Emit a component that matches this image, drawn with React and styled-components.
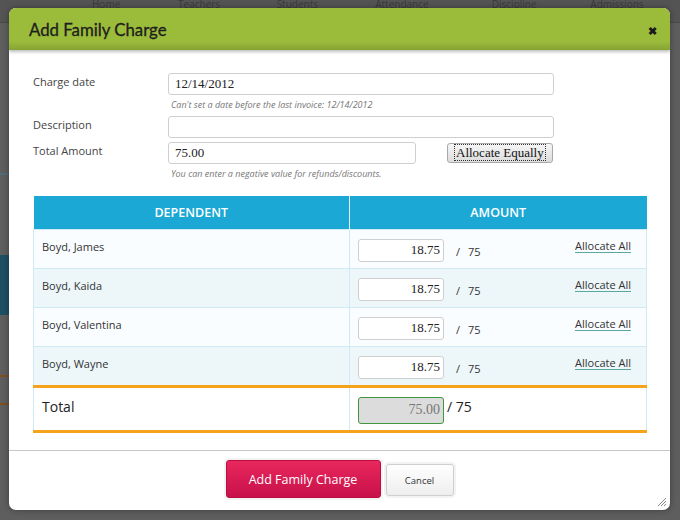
import React from 'react'
import styled, { createGlobalStyle } from 'styled-components'

const GlobalStyle = createGlobalStyle`
  html, body {
    margin: 0;
    padding: 0;
    background: #5c5c5c;
    font-family: 'Open Sans', 'Liberation Sans', sans-serif;
  }
  #root {
    width: 680px;
    height: 520px;
    position: relative;
    overflow: hidden;
  }
`

const Backdrop = styled.div`
  width: 680px;
  height: 520px;
  background: #5e5e5e;
  display: flex;
  flex-direction: column;
`

const BackNav = styled.div`
  height: 22px;
  background: #545454;
  border-bottom: 1px solid #4a4a4a;
  display: flex;
  padding-left: 92px;
  align-items: flex-start;
  overflow: hidden;
`

const BackNavItem = styled.span`
  width: ${(p) => p.w}px;
  font-size: 10px;
  line-height: 8px;
  color: #3a3a3a;
`

const BackStrip = styled.div`
  height: ${(p) => p.h}px;
  background: ${(p) => p.bg};
  margin-top: ${(p) => p.mt || 0}px;
  width: 40px;
`

const Modal = styled.div`
  position: absolute;
  left: 9px;
  top: 8px;
  width: 661px;
  height: 502px;
  background: #fff;
  border-radius: 7px;
  overflow: hidden;
  display: flex;
  flex-direction: column;
  box-shadow: 0 0 6px rgba(0, 0, 0, 0.35);
`

const Header = styled.div`
  height: 42px;
  flex: none;
  background: linear-gradient(to bottom, #9bbb3a 0%, #9bbb3a 80%, #86a333 100%);
  display: flex;
  align-items: center;
  justify-content: space-between;
  padding: 0 13px 0 20px;
  box-shadow: 0 2px 3px rgba(0, 0, 0, 0.25);
  position: relative;
  z-index: 1;
`

const Title = styled.h3`
  margin: 0;
  font-family: Lato, 'Open Sans', sans-serif;
  font-size: 16.8px;
  font-weight: 400;
  color: #1e1e1e;
  -webkit-text-stroke: 0.3px #1e1e1e;
`

const Close = styled.span`
  font-size: 11px;
  font-weight: 700;
  color: #1a1a1a;
  margin-top: 2px;
`

const Body = styled.div`
  flex: 1;
  padding: 23px 23px 0 24px;
`

const Form = styled.div`
  display: grid;
  grid-template-columns: 135px 1fr;
  align-items: start;
`

const Label = styled.label`
  font-size: 11px;
  color: #444;
  line-height: 16px;
  margin-top: ${(p) => p.mt || 0}px;
  grid-column: 1;
`

const Field = styled.div`
  grid-column: 2;
  display: flex;
  align-items: center;
  margin-top: ${(p) => p.mt || 0}px;
`

const TextInput = styled.input`
  box-sizing: border-box;
  width: ${(p) => p.w}px;
  height: 22px;
  border: 1px solid #cfcfcf;
  border-radius: 3px;
  padding: 0 6px;
  font-family: 'Liberation Serif', 'DejaVu Serif', serif;
  font-size: 13px;
  color: #222;
  background: #fff;
  outline: none;
`

const Hint = styled.div`
  grid-column: 2;
  font-size: 9px;
  font-style: italic;
  color: #777;
  padding-left: 3px;
  margin-top: 4px;
  line-height: 12px;
`

const PlainButton = styled.button`
  margin-left: 31px;
  height: 20px;
  padding: 0 7px;
  font-family: 'Liberation Serif', 'DejaVu Serif', serif;
  font-size: 13px;
  color: #111;
  border: 1px solid #a9a9a9;
  border-radius: 3px;
  background: linear-gradient(to bottom, #f6f6f6, #dcdcdc);
  span {
    outline: 1px dotted #333;
    padding: 0 1px;
  }
`

const Table = styled.table`
  width: 614px;
  margin-top: 16px;
  border-collapse: collapse;
  table-layout: fixed;
  font-size: 11px;
  color: #333;
`

const Th = styled.th`
  background: #1ba8d5;
  color: #fff;
  font-weight: 600;
  font-size: 12.5px;
  height: 33px;
  padding: 0;
  text-align: center;
  border-left: ${(p) => (p.divider ? '1px solid #e6f5fb' : 'none')};
`

const Tr = styled.tr`
  background: ${(p) => (p.alt ? '#edf7fa' : '#fafdff')};
`

const Td = styled.td`
  height: 38px;
  border: 1px solid #cfeaf4;
  padding: 0 8px;
  vertical-align: middle;
`

const NameText = styled.div`
  margin-top: -6px;
`

const AmountCell = styled.div`
  display: flex;
  align-items: center;
`

const AmountInput = styled(TextInput)`
  width: 86px;
  text-align: right;
  padding-right: 3px;
  height: 23px;
  margin-top: 2px;
  ${(p) =>
    p.total &&
    `
    background: #dcdcdc;
    border-color: #3f963f;
    color: #777;
    height: 27px;
    font-size: 14px;
  `}
`

const Of = styled.span`
  margin-left: 12px;
  font-size: 11px;
  color: #333;
  word-spacing: 5px;
  margin-top: 4px;
`

const TotalOf = styled.span`
  margin-left: 3px;
  font-size: 14px;
  color: #222;
  margin-top: -6px;
`

const AllocLink = styled.a`
  margin-left: auto;
  margin-right: 7px;
  color: #333;
  text-decoration: none;
  border-bottom: 1px solid #5aa8a0;
  line-height: 12px;
  margin-top: -6px;
  cursor: pointer;
`

const TotalRow = styled.tr`
  background: #fff;
  border-top: 3px solid #f7a21b;
  border-bottom: 3px solid #f7a21b;
`

const TotalTd = styled.td`
  height: 42px;
  padding: 0 8px;
  border-left: 1px solid #cfeaf4;
  border-right: 1px solid #cfeaf4;
  vertical-align: middle;
`

const TotalLabel = styled.div`
  font-size: 14px;
  color: #222;
  margin-top: -6px;
`

const Footer = styled.div`
  height: 60px;
  flex: none;
  border-top: 1px solid #c8c8c8;
  display: flex;
  justify-content: center;
  align-items: flex-start;
  gap: 5px;
  padding-top: 9px;
  box-sizing: border-box;
  position: relative;
`

const PrimaryButton = styled.button`
  width: 155px;
  height: 38px;
  border: 1px solid #b90d42;
  border-radius: 3px;
  background: linear-gradient(to bottom, #e8275d, #c8114a);
  color: #fff;
  font-family: 'Open Sans', 'Liberation Sans', sans-serif;
  font-size: 12.5px;
  box-shadow: 0 0 0 2px #f3f3f3;
`

const SecondaryButton = styled.button`
  width: 68px;
  height: 32px;
  margin-top: 4px;
  border: 1px solid #cfcfcf;
  border-radius: 3px;
  background: linear-gradient(to bottom, #ffffff, #eeeeee);
  color: #333;
  font-family: 'Open Sans', 'Liberation Sans', sans-serif;
  font-size: 9.5px;
  box-shadow: 0 0 0 2px #f3f3f3;
`

const Grip = styled.svg`
  position: absolute;
  right: 3px;
  bottom: 3px;
`

const rows = ['Boyd, James', 'Boyd, Kaida', 'Boyd, Valentina', 'Boyd, Wayne']

const navItems = [
  ['Home', 96],
  ['Teachers', 110],
  ['Students', 110],
  ['Attendance', 130],
  ['', 0],
  ['Discipline', 110],
  ['Admissions', 100],
]

export default function App() {
  return (
    <>
      <GlobalStyle />
      <Backdrop>
        <BackNav>
          {navItems.map(([t, w], i) => (
            <BackNavItem key={i} w={w}>
              {t}
            </BackNavItem>
          ))}
        </BackNav>
        <BackStrip h={2} bg='#4f6a78' mt={150} />
        <BackStrip h={60} bg='#1f4f63' mt={80} />
        <BackStrip h={2} bg='#7a5020' mt={60} />
        <BackStrip h={2} bg='#7a5020' mt={26} />
      </Backdrop>

      <Modal>
        <Header>
          <Title>Add Family Charge</Title>
          <Close>✖</Close>
        </Header>

        <Body>
          <Form>
            <Label mt={1}>Charge date</Label>
            <Field>
              <TextInput w={386} defaultValue='12/14/2012' />
            </Field>
            <Hint>Can't set a date before the last invoice: 12/14/2012</Hint>

            <Label mt={6}>Description</Label>
            <Field mt={5}>
              <TextInput w={386} defaultValue='' />
            </Field>

            <Label mt={5}>Total Amount</Label>
            <Field mt={4}>
              <TextInput w={248} defaultValue='75.00' />
              <PlainButton>
                <span>Allocate Equally</span>
              </PlainButton>
            </Field>
            <Hint>You can enter a negative value for refunds/discounts.</Hint>
          </Form>

          <Table>
            <colgroup>
              <col style={{ width: 316 }} />
              <col />
            </colgroup>
            <thead>
              <tr>
                <Th>DEPENDENT</Th>
                <Th divider>AMOUNT</Th>
              </tr>
            </thead>
            <tbody>
              {rows.map((name, i) => (
                <Tr key={name} alt={i % 2 === 1}>
                  <Td>
                    <NameText>{name}</NameText>
                  </Td>
                  <Td>
                    <AmountCell>
                      <AmountInput defaultValue='18.75' />
                      <Of>/ 75</Of>
                      <AllocLink>Allocate All</AllocLink>
                    </AmountCell>
                  </Td>
                </Tr>
              ))}
              <TotalRow>
                <TotalTd>
                  <TotalLabel>Total</TotalLabel>
                </TotalTd>
                <TotalTd>
                  <AmountCell>
                    <AmountInput total readOnly defaultValue='75.00' />
                    <TotalOf>/ 75</TotalOf>
                  </AmountCell>
                </TotalTd>
              </TotalRow>
            </tbody>
          </Table>
        </Body>

        <Footer>
          <PrimaryButton>Add Family Charge</PrimaryButton>
          <SecondaryButton>Cancel</SecondaryButton>
          <Grip width='12' height='12' viewBox='0 0 12 12'>
            <path d='M11 3 L3 11 M11 6 L6 11 M11 9 L9 11' stroke='#888' strokeWidth='1' />
          </Grip>
        </Footer>
      </Modal>
    </>
  )
}
